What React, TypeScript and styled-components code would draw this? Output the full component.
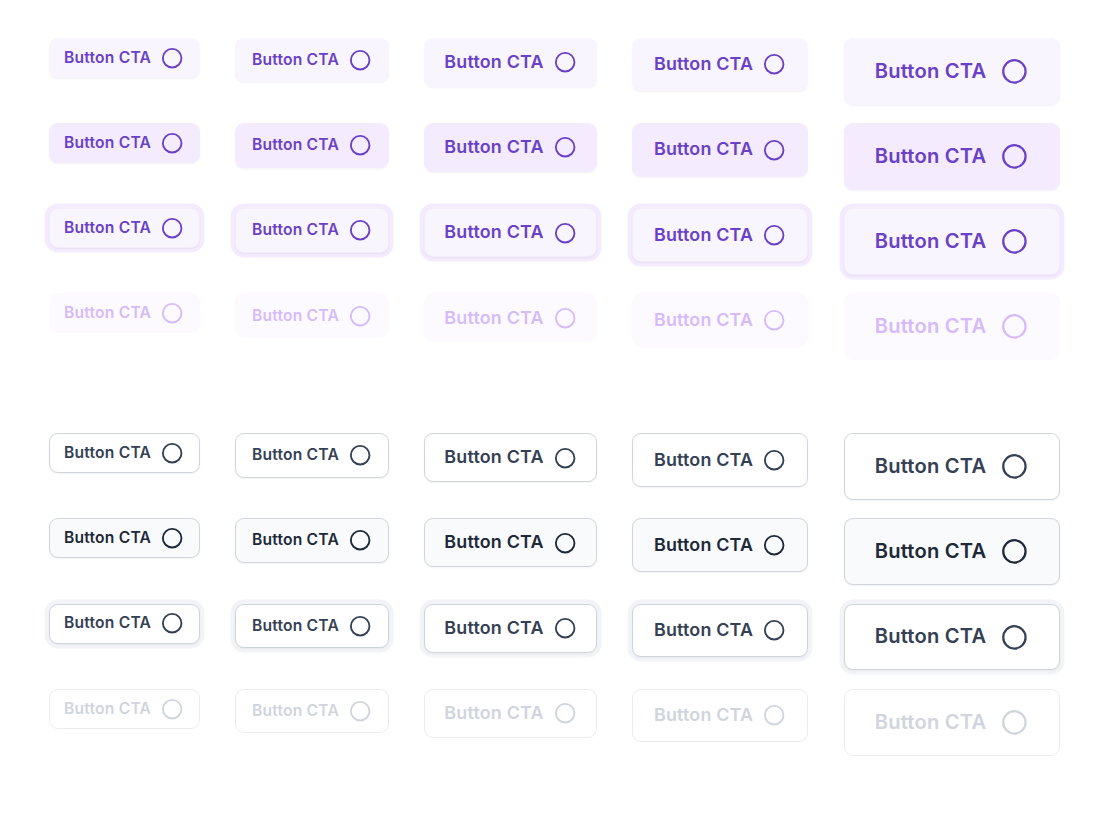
import React from "react";
import styled, { createGlobalStyle, css } from "styled-components";

const K = 1.117;
const s = (n: number) => `${(n * K).toFixed(2)}px`;

const Global = createGlobalStyle`
  html, body { margin: 0; padding: 0; background: #ffffff; }
  body { font-family: Inter, "Noto Sans", sans-serif; -webkit-font-smoothing: antialiased; }
`;

type Size = "sm" | "md" | "lg" | "xl" | "2xl";
type Variant = "color" | "gray";
type State = "default" | "hover" | "focus" | "disabled";

const sizes: Record<Size, { py: number; px: number; font: number; lh: number; gap: number; icon: number }> = {
  sm: { py: 8, px: 14, font: 14, lh: 20, gap: 9, icon: 20 },
  md: { py: 10, px: 15, font: 14, lh: 20, gap: 9, icon: 20 },
  lg: { py: 10, px: 18, font: 16, lh: 24, gap: 9, icon: 20 },
  xl: { py: 12, px: 19.5, font: 16, lh: 24, gap: 9, icon: 20 },
  "2xl": { py: 16, px: 28, font: 18, lh: 28, gap: 13, icon: 24 },
};

const palette = {
  color: {
    default: { bg: "#F9F5FF", border: "#F9F5FF", fg: "#6941C6", ring: "none" },
    hover: { bg: "#F4EBFF", border: "#F4EBFF", fg: "#6941C6", ring: "none" },
    focus: { bg: "#F9F5FF", border: "#F4EBFF", fg: "#6941C6", ring: "#F4EBFF" },
    disabled: { bg: "#FCFAFF", border: "#FCFAFF", fg: "#D6BBFB", ring: "none" },
  },
  gray: {
    default: { bg: "#FFFFFF", border: "#D0D5DD", fg: "#344054", ring: "none" },
    hover: { bg: "#F9FAFB", border: "#D0D5DD", fg: "#1D2939", ring: "none" },
    focus: { bg: "#FFFFFF", border: "#D0D5DD", fg: "#344054", ring: "#F2F4F7" },
    disabled: { bg: "#FFFFFF", border: "#EAECF0", fg: "#D0D5DD", ring: "none" },
  },
};

const Page = styled.main`
  display: flex;
  flex-direction: column;
  gap: 73px;
  padding: ${s(34)} 0 0 48.5px;
`;

const Group = styled.section`
  display: flex;
  flex-direction: column;
  gap: 18.4px;
`;

const Row = styled.div`
  display: flex;
  align-items: flex-start;
  gap: 35.2px;
`;

const Btn = styled.button<{ $size: Size; $variant: Variant; $state: State }>`
  ${({ $size, $variant, $state }) => {
    const z = sizes[$size];
    const c = palette[$variant][$state];
    const shadowXs = $state === "disabled" ? "" : "0 1px 2px rgba(16, 24, 40, 0.05)";
    const ring = c.ring !== "none" ? `0 0 0 ${s(4)} ${c.ring}` : "";
    const shadow = [shadowXs, ring].filter(Boolean).join(", ") || "none";
    return css`
      display: inline-flex;
      align-items: center;
      justify-content: center;
      gap: ${s(z.gap)};
      padding: ${s(z.py - 1)} ${s(z.px)} ${s(z.py - 1)} ${s(z.px - 1)};
      font-family: Inter, "Noto Sans", sans-serif;
      font-weight: 600;
      font-size: ${s(z.font)};
      line-height: ${s(z.lh)};
      letter-spacing: 0.2px;
      color: ${c.fg};
      background: ${c.bg};
      border: ${s(1)} solid ${c.border};
      border-radius: ${s(8)};
      box-shadow: ${shadow};
      white-space: nowrap;
      cursor: ${$state === "disabled" ? "not-allowed" : "pointer"};
    `;
  }}
`;

const Icon = ({ size }: { size: number }) => (
  <svg width={size * K} height={size * K} viewBox="0 0 24 24" fill="none" stroke="currentColor" strokeWidth={2} strokeLinecap="round" strokeLinejoin="round">
    <circle cx="12" cy="12" r="10" />
  </svg>
);

const sizeList: Size[] = ["sm", "md", "lg", "xl", "2xl"];
const stateList: State[] = ["default", "hover", "focus", "disabled"];

export default function App() {
  return (
    <>
      <Global />
      <Page>
        {(["color", "gray"] as Variant[]).map((v) => (
          <Group key={v}>
            {stateList.map((st) => (
              <Row key={st}>
                {sizeList.map((sz) => (
                  <Btn key={sz} $size={sz} $variant={v} $state={st} disabled={st === "disabled"}>
                    Button CTA
                    <Icon size={sizes[sz].icon} />
                  </Btn>
                ))}
              </Row>
            ))}
          </Group>
        ))}
      </Page>
    </>
  );
}
